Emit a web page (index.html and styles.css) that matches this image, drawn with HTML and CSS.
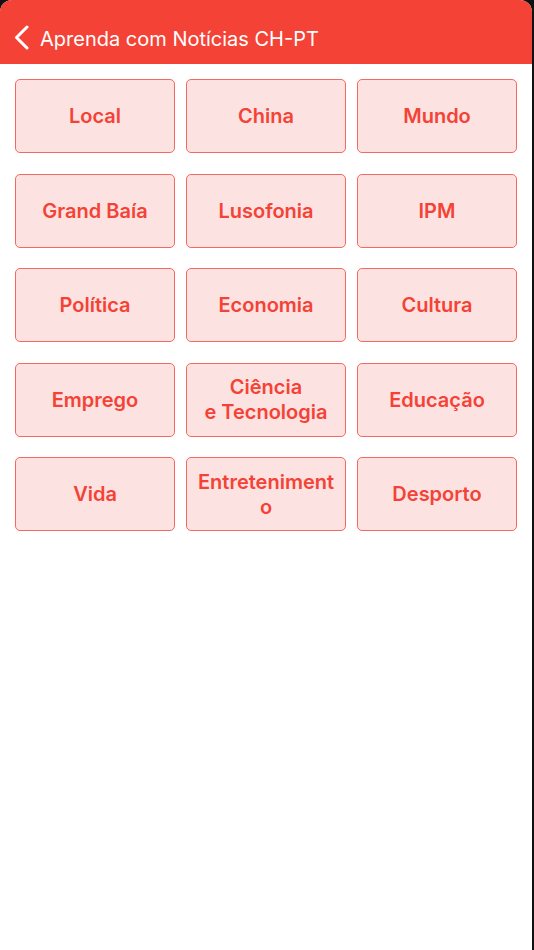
FILE: index.html
```html
<!DOCTYPE html>
<html lang="pt">
<head>
<meta charset="utf-8">
<title>Aprenda com Notícias CH-PT</title>
<link rel="stylesheet" href="styles.css">
</head>
<body>
<div class="screen">
  <header class="topbar">
    <svg class="back" width="18" height="26" viewBox="0 0 18 26" aria-hidden="true">
      <path d="M14 2 L3.5 12.5 L14 23" fill="none" stroke="#fff" stroke-width="3" stroke-linecap="round" stroke-linejoin="round"/>
    </svg>
    <h1 class="title">Aprenda com Notícias CH-PT</h1>
  </header>
  <main class="grid">
    <div class="cat">Local</div>
    <div class="cat">China</div>
    <div class="cat">Mundo</div>
    <div class="cat">Grand Baía</div>
    <div class="cat">Lusofonia</div>
    <div class="cat">IPM</div>
    <div class="cat">Política</div>
    <div class="cat">Economia</div>
    <div class="cat">Cultura</div>
    <div class="cat">Emprego</div>
    <div class="cat">Ciência<br>e Tecnologia</div>
    <div class="cat">Educação</div>
    <div class="cat">Vida</div>
    <div class="cat cat-break">Entretenimento</div>
    <div class="cat">Desporto</div>
  </main>
</div>
</body>
</html>
```
FILE: styles.css
```css
html, body {
  margin: 0;
  padding: 0;
  background: #111;
}
body {
  width: 534px;
  height: 950px;
  overflow: hidden;
}
.screen {
  width: 532px;
  height: 950px;
  background: #fff;
  border-top-left-radius: 12px;
  border-top-right-radius: 12px;
  overflow: hidden;
  font-family: Inter, "Noto Sans", Roboto, sans-serif;
}
.topbar {
  height: 64px;
  background: #F44336;
  display: flex;
  align-items: flex-end;
  padding: 0 0 11px 13px;
  box-sizing: border-box;
  gap: 9px;
}
.back {
  display: block;
  margin-bottom: 2px;
}
.title {
  margin: 0;
  color: #fff;
  font-size: 20px;
  font-weight: 400;
  line-height: 28px;
  letter-spacing: 0;
}
.grid {
  display: grid;
  grid-template-columns: repeat(3, 160px);
  grid-auto-rows: 74px;
  column-gap: 11px;
  row-gap: 20.5px;
  padding: 15px 0 0 15px;
}
.cat {
  box-sizing: border-box;
  background: #FDE2E2;
  border: 1.5px solid #F26A60;
  border-radius: 5px;
  display: flex;
  align-items: center;
  justify-content: center;
  text-align: center;
  color: #F44336;
  font-size: 20px;
  font-weight: 600;
  line-height: 25px;
  padding: 1px 10px 0;
}
.cat-break {
  word-break: break-all;
  padding: 1px 8px 0;
}
```
